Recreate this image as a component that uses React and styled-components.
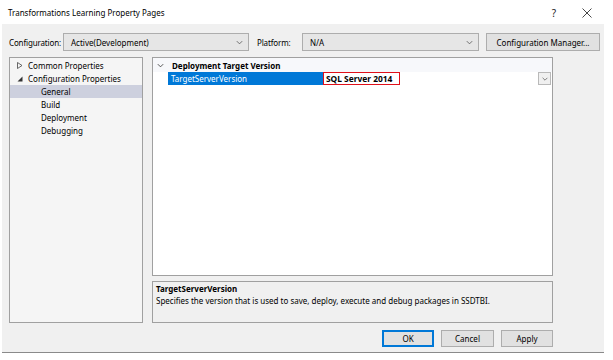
import React from "react";
import styled, { createGlobalStyle } from "styled-components";

const Global = createGlobalStyle`
  html, body { margin: 0; padding: 0; background: #ffffff; }
  body { font-family: "Noto Sans", "Open Sans", sans-serif; font-size: 8px; color: #000; }
  * { box-sizing: border-box; }
`;

const Screen = styled.div`
  width: 613px;
  height: 360px;
  padding-left: 2px;
  background: #fff;
`;

const Window = styled.div`
  width: 602px;
  display: flex;
  flex-direction: column;
`;

const TitleBar = styled.div`
  height: 24px;
  background: #fff;
  display: flex;
  align-items: center;
  padding: 1px 0 0 6px;
`;

const Title = styled.div`
  flex: 1;
  font-size: 8px;
`;

const TitleButton = styled.div`
  width: ${(p) => p.$w}px;
  display: flex;
  justify-content: center;
  align-items: center;
  font-size: ${(p) => p.$size}px;
  color: #222;
`;

const Body = styled.div`
  height: 329px;
  background: #f0f0f0;
  border-bottom: 1px solid #8a8a8a;
  padding: 9px 0 0 7px;
  display: flex;
  flex-direction: column;
`;

const ConfigRow = styled.div`
  height: 18px;
  display: flex;
  align-items: center;
`;

const Label = styled.div`
  width: ${(p) => p.$w}px;
  white-space: nowrap;
  letter-spacing: -0.15px;
`;

const Combo = styled.div`
  width: ${(p) => p.$w}px;
  height: 18px;
  background: #e6e6e6;
  border: 1px solid #adadad;
  display: flex;
  align-items: center;
  padding-left: 7px;
  margin-right: ${(p) => p.$mr}px;
`;

const ComboText = styled.div`
  flex: 1;
`;

const Chevron = ({ color = "#555", size = 9 }) => (
  <svg width={size} height={size} viewBox="0 0 10 10">
    <path d="M2 3.5 L5 6.5 L8 3.5" fill="none" stroke={color} strokeWidth="0.9" />
  </svg>
);

const ChevronWrap = styled.div`
  width: 18px;
  display: flex;
  justify-content: center;
  align-items: center;
`;

const Button = styled.div`
  width: ${(p) => p.$w}px;
  height: ${(p) => p.$h || 17}px;
  background: #e1e1e1;
  border: 1px solid ${(p) => (p.$primary ? "#0078d7" : "#adadad")};
  box-shadow: ${(p) => (p.$primary ? "inset 0 0 0 1px #0078d7" : "none")};
  display: flex;
  align-items: center;
  justify-content: center;
  white-space: nowrap;
`;

const Main = styled.div`
  margin-top: 6px;
  height: 266px;
  display: flex;
  gap: 9px;
`;

const Tree = styled.div`
  width: 134px;
  background: #f5f5f5;
  border: 1px solid #a0a0a0;
  padding-top: 1px;
  display: flex;
  flex-direction: column;
`;

const TreeRow = styled.div`
  height: 13px;
  display: flex;
  align-items: center;
  padding-left: ${(p) => p.$indent}px;
  background: ${(p) => (p.$selected ? "#cdd0de" : "transparent")};
  white-space: nowrap;
`;

const Expander = styled.div`
  width: 11px;
  display: flex;
  align-items: center;
`;

const RightCol = styled.div`
  width: 401px;
  display: flex;
  flex-direction: column;
  gap: 5px;
`;

const Grid = styled.div`
  height: 219px;
  background: #fff;
  border: 1px solid #a0a0a0;
  display: flex;
  flex-direction: column;
`;

const CategoryRow = styled.div`
  height: 14px;
  background: #f7f8fb;
  display: flex;
  align-items: center;
  font-weight: 700;
  padding-left: 3px;
`;

const CatChevron = styled.div`
  width: 16px;
  display: flex;
  align-items: center;
`;

const PropRow = styled.div`
  height: 13px;
  display: flex;
  padding-left: 15px;
`;

const PropName = styled.div`
  width: 155px;
  background: #0078d7;
  color: #fff;
  padding-left: 3px;
  display: flex;
  align-items: center;
`;

const PropValue = styled.div`
  flex: 1;
  display: flex;
  align-items: center;
  padding-right: 1px;
`;

const ValueBox = styled.div`
  width: 77px;
  height: 13px;
  border: 1px solid #e0101a;
  font-weight: 700;
  padding-left: 2px;
  display: flex;
  align-items: center;
  font-size: 8.4px;
`;

const Spacer = styled.div`
  flex: 1;
`;

const DropBtn = styled.div`
  width: 13px;
  height: 13px;
  border: 1px solid #b9b9b9;
  background: #f0f0f0;
  display: flex;
  align-items: center;
  justify-content: center;
`;

const Desc = styled.div`
  height: 42px;
  background: #f0f0f0;
  border: 1px solid #a0a0a0;
  padding: 1px 3px;
  line-height: 12px;
`;

const DescTitle = styled.div`
  font-weight: 700;
`;

const Footer = styled.div`
  margin-top: 7px;
  display: flex;
  gap: 7px;
  padding-left: 373px;
`;

export default function App() {
  return (
    <Screen>
      <Global />
      <Window>
        <TitleBar>
          <Title>Transformations Learning Property Pages</Title>
          <TitleButton $w={32} $size={10}>?</TitleButton>
          <TitleButton $w={34}>
            <svg width="10" height="10" viewBox="0 0 10 10">
              <path d="M0.5 0.5 L9.5 9.5 M9.5 0.5 L0.5 9.5" stroke="#333" strokeWidth="0.9" fill="none" />
            </svg>
          </TitleButton>
        </TitleBar>
        <Body>
          <ConfigRow>
            <Label $w={54}>Configuration:</Label>
            <Combo $w={186} $mr={8}>
              <ComboText>Active(Development)</ComboText>
              <ChevronWrap><Chevron /></ChevronWrap>
            </Combo>
            <Label $w={45}>Platform:</Label>
            <Combo $w={177} $mr={7}>
              <ComboText>N/A</ComboText>
              <ChevronWrap><Chevron /></ChevronWrap>
            </Combo>
            <Button $w={114} $h={18}>Configuration Manager...</Button>
          </ConfigRow>
          <Main>
            <Tree>
              <TreeRow $indent={7}>
                <Expander>
                  <svg width="6" height="7" viewBox="0 0 6 7">
                    <path d="M0.5 0.5 L5 3.5 L0.5 6.5 Z" fill="none" stroke="#444" strokeWidth="0.8" />
                  </svg>
                </Expander>
                Common Properties
              </TreeRow>
              <TreeRow $indent={7}>
                <Expander>
                  <svg width="6" height="6" viewBox="0 0 6 6">
                    <path d="M5.5 0.5 L5.5 5.5 L0.5 5.5 Z" fill="#333" />
                  </svg>
                </Expander>
                Configuration Properties
              </TreeRow>
              <TreeRow $indent={31} $selected>General</TreeRow>
              <TreeRow $indent={31}>Build</TreeRow>
              <TreeRow $indent={31}>Deployment</TreeRow>
              <TreeRow $indent={31}>Debugging</TreeRow>
            </Tree>
            <RightCol>
              <Grid>
                <CategoryRow>
                  <CatChevron><Chevron color="#333" size={9} /></CatChevron>
                  Deployment Target Version
                </CategoryRow>
                <PropRow>
                  <PropName>TargetServerVersion</PropName>
                  <PropValue>
                    <ValueBox>SQL Server 2014</ValueBox>
                    <Spacer />
                    <DropBtn><Chevron size={8} /></DropBtn>
                  </PropValue>
                </PropRow>
              </Grid>
              <Desc>
                <DescTitle>TargetServerVersion</DescTitle>
                Specifies the version that is used to save, deploy, execute and debug packages in SSDTBI.
              </Desc>
            </RightCol>
          </Main>
          <Footer>
            <Button $w={52} $primary>OK</Button>
            <Button $w={53}>Cancel</Button>
            <Button $w={52}>Apply</Button>
          </Footer>
        </Body>
      </Window>
    </Screen>
  );
}
